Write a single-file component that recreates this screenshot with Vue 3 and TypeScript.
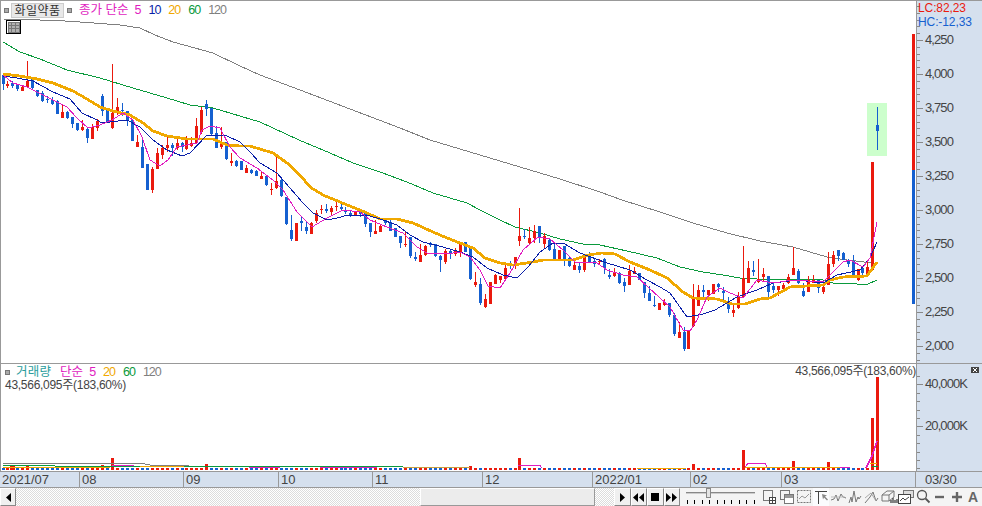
<script setup lang="ts">
type Raw = [number, number, number, number, number, 'r' | 'b']
interface Candle { x: number; bodyTop: number; bodyH: number; wickTop: number; wickBot: number; color: string }

const RED = '#ea1a0e'
const BLUE = '#1560d0'

// Sampled from the reference at 3x: [x, bodyTop, bodyBottom, wickTop, wickBottom, colour]
const sections: { x0: number; y0: number; rows: Raw[] }[] = [
  { x0: 0, y0: 60, rows: [
    [10,46,72,46,90,'b'],[22,72,78,63,85,'r'],[37,68,78,62,84,'b'],[52,75,87,75,93,'b'],[67,80,92,78,92,'r'],
    [82,64,82,2,85,'r'],[97,58,84,58,90,'b'],[112,90,108,90,112,'b'],[127,98,122,92,126,'b'],[142,118,122,108,130,'b'],
    [157,120,132,112,136,'b'],[172,124,162,120,162,'b'],[187,156,174,136,174,'r'],[202,156,174,152,178,'b'],[217,170,192,170,204,'b'],
    [232,188,208,188,212,'b'],[247,202,212,180,212,'r'],[262,208,236,205,248,'b'],[277,202,238,192,238,'r'],[292,182,202,178,212,'r'],
    [307,108,152,102,168,'b'],[322,148,188,148,188,'b'],[337,158,204,12,206,'r'],[352,142,158,114,166,'r'],[367,150,154,128,168,'b'],
    [382,154,184,154,198,'b'],[397,180,242,180,242,'b'],[412,246,260,224,260,'r'],[427,260,324,234,324,'b'],[442,312,390,312,390,'b'],
    [457,326,390,322,398,'r'],[472,278,326,264,326,'r'],[487,264,286,256,298,'r'],[502,255,265,224,275,'r'],[517,254,264,250,288,'b'],
    [532,248,262,234,270,'r'],[547,250,262,245,276,'b'],[559,233,266,228,270,'r'],[574,248,256,232,262,'r'],[589,198,248,174,250,'r'],
    [604,150,216,140,222,'r'],[619,132,146,120,168,'b'],[634,144,222,144,224,'b'],[649,220,264,198,264,'b'],[664,250,262,200,268,'r'],
    [679,246,298,246,300,'b'],[694,304,310,280,318,'r'],[709,302,316,300,322,'b'],
  ] },
  { x0: 240, y0: 140, rows: [
    [4,62,88,62,88,'b'],[19,84,98,76,98,'r'],[34,90,100,88,102,'b'],[49,92,106,90,106,'b'],[64,108,116,92,116,'r'],
    [79,108,134,104,138,'b'],[94,148,151,130,165,'r'],[109,124,144,42,148,'r'],[124,120,168,115,170,'b'],[139,172,252,172,254,'b'],
    [154,270,298,226,302,'b'],[169,248,302,248,302,'r'],[184,242,248,228,272,'b'],[199,260,272,244,282,'b'],[214,250,282,246,282,'r'],
    [229,220,245,210,248,'r'],[244,207,209,195,222,'r'],[259,206,211,192,220,'b'],[274,204,216,198,224,'r'],[289,198,201,186,212,'r'],
    [304,200,206,192,210,'b'],[316,214,218,200,222,'b'],[331,220,226,212,230,'b'],[346,214,226,212,228,'r'],[361,216,222,208,230,'b'],
    [376,216,252,216,262,'b'],[391,248,276,248,292,'b'],[406,273,282,240,282,'r'],[421,258,276,252,276,'r'],[436,240,248,240,254,'b'],
    [451,246,274,240,274,'b'],[466,264,292,264,292,'b'],[481,288,310,288,324,'b'],[496,312,316,276,320,'r'],[511,292,348,292,354,'b'],
    [526,352,358,336,364,'b'],[541,344,366,312,366,'r'],[556,318,344,314,348,'r'],[571,310,316,306,322,'b'],[586,312,348,312,352,'b'],
    [601,348,360,344,396,'b'],[616,332,366,328,372,'r'],[631,334,340,330,356,'b'],[646,334,342,324,348,'r'],[661,308,338,308,350,'r'],
    [676,306,336,306,336,'b'],[691,324,416,324,420,'b'],
  ] },
  { x0: 460, y0: 200, rows: [
    [46,246,256,216,260,'r'],[61,252,310,234,314,'b'],[76,298,322,282,324,'r'],[91,246,312,246,312,'r'],[106,224,250,222,250,'r'],
    [121,228,240,228,248,'r'],[136,204,236,196,238,'r'],[151,188,198,182,206,'b'],[166,172,198,172,208,'r'],[178,108,123,24,138,'r'],
    [193,108,112,88,118,'b'],[208,114,130,82,132,'r'],[223,94,114,76,128,'r'],[238,78,114,78,128,'b'],[253,108,132,100,148,'r'],
    [268,120,150,114,152,'b'],[283,148,180,130,184,'b'],[298,150,180,150,182,'r'],[313,138,176,138,198,'b'],[328,174,198,172,202,'b'],
    [343,196,210,176,210,'r'],[358,198,210,186,218,'b'],[373,170,210,170,216,'r'],[388,168,186,156,190,'b'],[403,182,190,176,200,'b'],
    [418,184,188,178,192,'r'],[433,178,206,174,222,'b'],[448,226,232,206,238,'b'],[463,220,230,204,232,'r'],[478,218,248,216,252,'b'],
    [493,246,258,234,276,'b'],[508,212,254,196,254,'r'],[523,214,222,202,222,'r'],[538,220,240,218,240,'b'],[553,246,280,246,294,'b'],
    [568,280,304,258,304,'b'],[583,316,320,288,320,'b'],[598,308,330,308,330,'r'],[613,306,314,296,318,'r'],[628,310,345,310,350,'b'],
    [643,345,402,338,408,'b'],[658,396,414,366,414,'r'],
  ] },
  { x0: 660, y0: 200, rows: [
    [73,396,446,380,452,'b'],[85,392,446,392,446,'r'],[100,290,378,252,382,'r'],[115,270,318,255,318,'r'],[130,270,276,256,295,'b'],
    [145,270,285,270,304,'r'],[160,252,282,252,282,'r'],[175,252,262,250,275,'b'],[190,274,280,262,308,'b'],[205,306,326,290,338,'b'],
    [220,330,338,314,350,'r'],[235,292,326,276,326,'r'],[250,234,292,138,292,'r'],[265,204,248,183,248,'r'],[280,210,216,183,228,'b'],
    [295,238,248,178,248,'r'],[310,222,232,205,244,'r'],[325,228,276,228,294,'b'],[340,258,270,250,278,'b'],[355,258,270,258,288,'r'],
    [370,255,267,248,268,'r'],[385,230,248,222,252,'r'],[400,204,225,142,225,'r'],[415,212,248,206,252,'b'],[430,272,288,248,292,'b'],
    [445,240,276,228,276,'r'],[460,240,248,225,250,'r'],[475,240,264,240,280,'b'],[490,262,276,252,282,'r'],[505,192,255,155,255,'r'],
    [520,165,192,154,200,'r'],[535,150,168,150,182,'b'],[550,160,180,156,180,'b'],[565,180,192,176,200,'b'],[580,182,224,165,232,'b'],
    [595,208,242,208,242,'r'],[607,204,218,204,232,'b'],[622,202,226,184,226,'r'],[637,-114,210,-114,210,'r'],
  ] },
]

const candles: Candle[] = sections.flatMap(s =>
  s.rows.map(([x, t, b, wt, wb, c]) => ({
    x: Math.round(s.x0 + x / 3),
    bodyTop: Math.round(s.y0 + t / 3),
    bodyH: Math.max(1, Math.round((b - t) / 3)),
    wickTop: Math.round(s.y0 + wt / 3),
    wickBot: Math.round(s.y0 + wb / 3),
    color: c === 'r' ? RED : BLUE,
  })),
)

const pts = (a: number[][]) => a.map(p => p.join(',')).join(' ')

const ma120 = pts([[3,19],[40,20],[60,20.7],[90,22.7],[120,25],[140,28],[155,35],[173,42],[213,53],[240,66],[260,75],[300,90],[350,109],[400,128],[430,140],[480,155],[520,167],[560,179],[600,192],[622,200],[660,212],[693,223],[727,233],[760,241],[793,247],[827,257],[847,260],[873,263]])
const ma60 = pts([[3,42],[20,52],[40,59],[67,70],[100,78],[133,88],[167,98],[190,105],[213,108],[260,122],[299,140],[330,153],[353,163],[380,172],[407,182],[433,193],[467,203],[480,210],[500,220],[515,227],[540,233],[560,239],[583,244],[600,245],[627,251],[657,258],[680,267],[703,272],[723,275],[740,278],[757,279],[823,280],[833,283],[857,284],[868,284],[877,280]])
const ma20 = pts([[3,74],[20,76],[37,79],[53,83],[73,91],[87,99],[100,107],[113,111],[130,115],[143,123],[153,131],[167,136],[187,139],[213,139],[227,145],[240,146],[250,146],[273,153],[287,163],[300,175],[310,187],[323,195],[340,202],[367,213],[380,219],[397,219],[413,223],[433,232],[447,238],[460,243],[473,248],[485,258],[500,263],[513,265],[533,262],[543,260],[573,260],[588,255],[602,253],[615,254],[630,262],[650,270],[667,278],[683,292],[693,298],[717,299],[732,304],[745,304],[760,299],[770,298],[790,287],[823,285],[830,280],[843,277],[867,276],[877,262]])
const ma10 = pts([[3,76],[17,78],[33,81],[53,92],[70,99],[82,113],[97,120],[102,123],[110,122],[127,120],[140,127],[153,140],[167,150],[182,156],[190,153],[207,135],[227,136],[240,142],[250,152],[260,163],[277,173],[290,188],[303,203],[313,213],[327,220],[337,218],[348,215],[370,216],[380,219],[397,225],[410,235],[423,242],[443,247],[460,252],[473,257],[487,268],[503,275],[517,278],[528,267],[540,252],[553,243],[563,243],[580,253],[607,263],[630,270],[647,280],[660,287],[670,293],[687,317],[703,314],[715,310],[737,297],[757,290],[773,283],[797,280],[823,283],[837,275],[860,270],[870,258],[877,242]])
const ma5 = pts([[3,75],[13,83],[27,87],[37,92],[53,100],[67,107],[77,118],[88,128],[100,125],[112,120],[123,113],[133,120],[142,137],[150,160],[160,166],[168,160],[177,147],[197,143],[202,130],[210,126],[220,128],[230,147],[240,158],[257,168],[273,180],[283,190],[297,212],[312,227],[327,218],[343,210],[360,212],[370,220],[387,227],[403,233],[417,247],[427,253],[453,253],[460,252],[470,257],[480,270],[488,286],[500,288],[510,273],[523,250],[538,237],[550,239],[563,250],[575,262],[597,263],[607,270],[623,275],[637,277],[660,298],[670,307],[683,330],[690,331],[697,320],[707,297],[720,288],[730,293],[743,298],[757,280],[773,283],[793,280],[823,282],[843,262],[850,260],[863,267],[870,258],[877,222]])

// Price axis
const priceTicks = ['4,250','4,000','3,750','3,500','3,250','3,000','2,750','2,500','2,250','2,000'].map((label, i) => ({ label, y: 40 + i * 34 }))
const minorY: number[] = []
for (let y = 40 - 34; y < 362; y += 6.8) minorY.push(Math.round(y))

// Volume pane
const bigVolumes = [
  { x: 10, w: 5, top: 466, c: RED }, { x: 26, w: 3, top: 466, c: RED }, { x: 101, w: 3, top: 465, c: RED },
  { x: 111, w: 3, top: 458, c: RED }, { x: 205, w: 3, top: 464, c: RED }, { x: 469, w: 3, top: 466, c: RED },
  { x: 518, w: 3, top: 458, c: RED }, { x: 692, w: 3, top: 464, c: RED }, { x: 742, w: 3, top: 450, c: RED },
  { x: 792, w: 3, top: 461, c: RED }, { x: 827, w: 3, top: 462, c: RED }, { x: 871, w: 3, top: 418, c: RED },
  { x: 876, w: 3, top: 377, c: RED },
]
const smallVolumes = candles.map(c => ({ x: c.x - 1, c: c.color }))
const volMinor: number[] = []
for (let y = 376; y < 470; y += 8.4) volMinor.push(Math.round(y))

const dateCells = [
  { w: 80, t: '2021/07' }, { w: 104, t: '08' }, { w: 95, t: '09' }, { w: 94, t: '10' }, { w: 110, t: '11' },
  { w: 110, t: '12' }, { w: 98, t: '2022/01' }, { w: 91, t: '02' }, { w: 134, t: '03' },
]
const sliderTicks = Array.from({ length: 10 }, (_, i) => i)
</script>

<template>
  <div class="page">
    <section class="price-row">
      <div class="plot">
        <svg class="chart" width="916" height="362" viewBox="0 1 916 362" shape-rendering="crispEdges">
          <rect x="867" y="103" width="20" height="53" fill="#ccffcc" />
          <polyline :points="ma120" class="l" stroke="#7f7f7f" stroke-width="1" />
          <polyline :points="ma60" class="l" stroke="#0a9a3c" stroke-width="1" />
          <g v-for="c in candles" :key="c.x + '-' + c.bodyTop">
            <rect :x="c.x" :y="c.wickTop" width="1" :height="c.wickBot - c.wickTop" :fill="c.color" />
            <rect :x="c.x - 1" :y="c.bodyTop" width="3" :height="c.bodyH" :fill="c.color" />
          </g>
          <polyline :points="ma20" class="l" stroke="#f0a800" stroke-width="2.8" />
          <polyline :points="ma10" class="l" stroke="#0a1fa8" stroke-width="1" />
          <polyline :points="ma5" class="l" stroke="#e01cc0" stroke-width="1" />
          <rect x="877" y="107" width="1" height="43" :fill="BLUE" />
          <rect x="876" y="125" width="3" height="6" :fill="BLUE" />
          <rect x="912" y="34" width="3" height="136" :fill="RED" />
          <rect x="912" y="170" width="3" height="134" :fill="BLUE" />
        </svg>
        <div class="legend">
          <i class="sq"></i>
          <span class="name-btn">화일약품</span>
          <i class="sq"></i>
          <span class="m first">종가 단순</span>
          <span class="m five num">5</span>
          <span class="n10 num">10</span>
          <span class="o num">20</span>
          <span class="g num">60</span>
          <span class="gy num">120</span>
        </div>
        <svg class="grid-icon" width="15" height="14" viewBox="0 0 15 14" shape-rendering="crispEdges">
          <rect x="0.5" y="0.5" width="14" height="13" fill="#fff" stroke="#000" />
          <rect x="2" y="2" width="11" height="10" fill="#b0b0b0" stroke="#777" stroke-width="1" />
          <path d="M2 5h11M2 8.5h11M5.5 2v10M9.5 2v10" stroke="#777" fill="none" />
        </svg>
      </div>
      <aside class="axis">
        <svg width="65" height="362" viewBox="917 1 65 362" shape-rendering="crispEdges">
          <rect v-for="y in minorY" :key="y" x="917" :y="y" width="3" height="1" fill="#888" />
          <g v-for="t in priceTicks" :key="t.label">
            <rect x="917" :y="t.y" width="6" height="1" fill="#888" />
            <text x="925" :y="t.y + 4" class="ax">{{ t.label }}</text>
          </g>
          <text x="918" y="11.5" class="lc">LC:82,23</text>
          <text x="918" y="25.5" class="hc">HC:-12,33</text>
        </svg>
      </aside>
    </section>

    <section class="vol-row">
      <div class="plot">
        <svg class="chart" width="916" height="107" viewBox="0 364 916 107" shape-rendering="crispEdges">
          <rect v-for="v in smallVolumes" :key="v.x" :x="v.x" y="468" width="3" height="2" :fill="v.c" />
          <rect v-for="v in bigVolumes" :key="v.x" :x="v.x" :y="v.top" :width="v.w" :height="470 - v.top" :fill="v.c" />
          <polyline points="3,463.5 145,463.5 145,464.5 150,464.5 150,465.5 189,465.5" class="l" stroke="#7f7f7f" />
          <polyline points="3,465.5 55,465.5 55,466.5 403,466.5" class="l" stroke="#0a9a3c" />
          <polyline points="3,467.5 110,467.5" class="l" stroke="#f0a800" />
          <polyline points="140,466.5 184,466.5" class="l" stroke="#f0a800" />
          <polyline points="403,467.5 470,467.5" class="l" stroke="#c8a040" />
          <polyline points="637,468.5 686,468.5" class="l" stroke="#f0a800" />
          <polyline points="745,467.5 840,467.5" class="l" stroke="#f0a800" stroke-width="1.5" />
          <polyline points="112,465.5 134,465.5" class="l" stroke="#e01cc0" />
          <polyline points="518,465.5 540,465.5 542,468" class="l" stroke="#e01cc0" />
          <polyline points="745,467 748,463.5 765,463.5 767,467" class="l" stroke="#e01cc0" />
          <polyline points="249,467.5 280,467.5" class="l" stroke="#e01cc0" />
          <polyline points="320,467.5 377,467.5" class="l" stroke="#e01cc0" />
          <polyline points="840,467.5 850,467.5" class="l" stroke="#e01cc0" />
          <polyline points="866,468 872,456 877,441" class="l" stroke="#e01cc0" stroke-width="1.5" />
          <polyline points="870,464 877,463" class="l" stroke="#f0a800" />
          <polyline points="872,467 878,466" class="l" stroke="#0a9a3c" />
        </svg>
        <div class="vol-legend">
          <div class="vol-line">
            <i class="sq"></i>
            <span class="teal">거래량</span>
            <span class="m d">단순</span>
            <span class="m n5 num">5</span>
            <span class="o num">20</span>
            <span class="g num">60</span>
            <span class="gy num">120</span>
          </div>
          <div class="vol-val">43,566,095주(183,60%)</div>
        </div>
        <div class="vol-val right">43,566,095주(183,60%)</div>
      </div>
      <aside class="axis">
        <svg width="65" height="107" viewBox="917 364 65 107" shape-rendering="crispEdges">
          <rect v-for="y in volMinor" :key="y" x="917" :y="y" width="3" height="1" fill="#888" />
          <rect x="917" y="384" width="6" height="1" fill="#888" />
          <rect x="917" y="426" width="6" height="1" fill="#888" />
          <text x="925" y="388" class="ax">40,000K</text>
          <text x="925" y="430" class="ax">20,000K</text>
          <rect x="971" y="367" width="8" height="6" fill="#444" />
          <path d="M973 368l4 4M977 368l-4 4" stroke="#fff" fill="none" />
        </svg>
      </aside>
    </section>

    <section class="date-row">
      <div class="dates">
        <span v-for="c in dateCells" :key="c.t" class="cell" :style="{ width: c.w + 'px' }">{{ c.t }}</span>
      </div>
      <span class="date-end">03/30</span>
    </section>

    <section class="tool-row">
      <button class="btn arrow-btn">
        <svg width="7" height="9" viewBox="0 0 7 9"><path d="M6 0v9L1 4.5z" fill="#000" /></svg>
      </button>
      <div class="track left-track"></div>
      <div class="thumb"></div>
      <div class="track right-track"></div>
      <button class="btn play"><svg width="9" height="9" viewBox="0 0 9 9"><path d="M2 0v9l5-4.5z" /></svg></button>
      <button class="btn play"><svg width="11" height="9" viewBox="0 0 11 9"><path d="M5 0v9L0 4.5zM11 0v9L6 4.5z" /></svg></button>
      <button class="btn play"><svg width="9" height="9" viewBox="0 0 9 9"><rect width="8" height="8" /></svg></button>
      <button class="btn play"><svg width="11" height="9" viewBox="0 0 11 9"><path d="M0 0v9l5-4.5zM6 0v9l5-4.5z" /></svg></button>
      <div class="slider">
        <svg width="72" height="18" viewBox="0 0 72 18" shape-rendering="crispEdges">
          <rect x="0" y="4" width="69" height="1" fill="#888" />
          <rect x="0" y="5" width="69" height="1" fill="#ccc" />
          <rect x="20" y="0" width="4" height="9" fill="#e4e4e4" stroke="#888" />
          <rect v-for="i in sliderTicks" :key="i" :x="1 + i * 7.4" y="12" width="1" height="4" fill="#000" />
        </svg>
      </div>
      <div class="icons">
        <svg width="205" height="18" viewBox="0 0 205 18" fill="none" stroke="#777" stroke-width="1">
          <!-- window + grid -->
          <rect x="1.5" y="2.5" width="9" height="10" />
          <rect x="7.5" y="9.5" width="6" height="6" fill="#fff" stroke="#444" />
          <path d="M7.5 12.5h6M10.5 9.5v6" stroke="#444" />
          <!-- overlapping windows -->
          <rect x="18.5" y="2.5" width="9" height="9" />
          <rect x="22.5" y="6.5" width="9" height="9" fill="#fff" />
          <rect x="23" y="7" width="8" height="3" fill="#999" stroke="none" />
          <!-- dashed chart frame -->
          <rect x="35.5" y="2.5" width="13" height="12" stroke-dasharray="2 1" />
          <path d="M37 11l3-3 3 2 4-4" stroke="#999" />
          <!-- pressed crosshair tool -->
          <rect x="51" y="0" width="16" height="18" fill="#fbfcfe" stroke="none" />
          <path d="M53 3.5h12M56.5 3v13" stroke="#444" />
          <path d="M60 6l5 1.5-2 1 3 3-1 1-3-3-1 2z" fill="#888" stroke="none" />
          <!-- line tools -->
          <path d="M69 12l3-1 2-4 2 6 3-7 2 3 3 1" />
          <path d="M69 9h14" stroke="#bbb" />
          <path d="M87 15l2-6 1 5 2-11 2 11 2-5 1 2 2-3" />
          <path d="M103 15l5-6 3-5 2 6 1 3 2-3" />
          <path d="M103 10l6-5 5 8" stroke="#aaa" />
          <!-- 3d box + bars -->
          <path d="M120 7l5-4h7v6l-5 4h-7zM120 7h7v6M127 7l5-4" />
          <path d="M129 15v-3M131 15v-5M133 15v-3M135 15v-4" stroke="#333" stroke-width="1.2" />
          <!-- picture chart -->
          <rect x="141.5" y="2.5" width="10" height="7" fill="#ddd" />
          <rect x="136.5" y="6.5" width="12" height="9" fill="#fff" stroke="#444" />
          <path d="M138 13l3-3 2 2 4-3" stroke="#444" />
          <!-- magnifier -->
          <circle cx="160" cy="7" r="4.5" stroke="#555" stroke-width="1.3" />
          <path d="M163.5 10.5l4 4" stroke="#555" stroke-width="1.8" />
          <!-- minus, plus -->
          <path d="M173 9h9" stroke="#666" stroke-width="2.4" />
          <path d="M190 9h10M195 4v10" stroke="#666" stroke-width="2.4" />
        </svg>
        <span class="a-icon">A</span>
      </div>
    </section>
  </div>
</template>

<style scoped>
.page {
  width: 982px;
  height: 506px;
  display: flex;
  flex-direction: column;
  overflow: hidden;
  background: #fff;
  font-family: "Liberation Sans", "Noto Sans CJK KR", sans-serif;
  font-size: 12px;
  color: #444;
}
.price-row,
.vol-row {
  display: flex;
  border-top: 1px solid #999;
  flex: none;
}
.price-row { height: 363px; box-sizing: border-box; border-top-width: 1px; }
.vol-row { height: 108px; box-sizing: border-box; }
.plot {
  position: relative;
  width: 916px;
  flex: none;
  border-left: 1px solid #999;
  box-sizing: border-box;
  overflow: hidden;
}
.chart { display: block; margin-left: -1px; }
.axis {
  flex: none;
  width: 66px;
  background: #d5e0ee;
  border-left: 1px solid #999;
  box-sizing: border-box;
}
.axis svg { display: block; }
.l { fill: none; stroke-linejoin: round; }
.ax {
  font-size: 13px;
  fill: #444;
  letter-spacing: -0.9px;
}
.lc, .hc { font-size: 12px; letter-spacing: -0.1px; }
.lc { fill: #ea1a0e; }
.hc { fill: #1560d0; }

.legend {
  position: absolute;
  top: 1px;
  left: 3px;
  display: flex;
  align-items: center;
  height: 16px;
  font-size: 12.5px;
  line-height: 16px;
}
.sq {
  display: inline-block;
  flex: none;
  background: #aaa;
  border: 1px solid #777;
  box-sizing: content-box;
  width: 3px;
  height: 3px;
}
.name-btn {
  width: 53px;
  height: 15px;
  margin: 0 3px 0 2px;
  text-align: center;
  line-height: 15px;
  background: #e8e8e8;
  border: 1px solid #ccc;
  box-sizing: border-box;
  color: #333;
  letter-spacing: 0.5px;
  font-size: 12px;
}
.num { letter-spacing: -1px; }
.first { margin-left: 7px; }
.legend .five { margin-left: 6px; }
.m { color: #e01cc0; }
.n10 { color: #0a1fa8; margin-left: 8px; }
.o { color: #f0a800; margin-left: 8px; }
.g { color: #0a9a3c; margin-left: 8px; }
.gy { color: #7f7f7f; margin-left: 8px; }
.grid-icon {
  position: absolute;
  left: 5px;
  top: 19px;
  display: block;
}

.vol-legend {
  position: absolute;
  top: 1px;
  left: 4px;
  font-size: 12.5px;
}
.vol-line {
  display: flex;
  align-items: center;
  height: 14px;
  line-height: 14px;
}
.teal { color: #2a9d9d; letter-spacing: 0.2px; margin-left: 6px; }
.vol-line .d { margin-left: 9px; }
.vol-line .n5 { margin-left: 6px; }
.vol-val {
  color: #444;
  font-size: 12px;
  line-height: 13px;
  letter-spacing: -0.28px;
  white-space: nowrap;
}
.right {
  position: absolute;
  top: 1px;
  right: 0;
}

.date-row {
  flex: none;
  height: 17px;
  display: flex;
  background: #d5e0ee;
  border-top: 1px solid #999;
  border-bottom: 1px solid #999;
  box-sizing: border-box;
  font-size: 13px;
  line-height: 15px;
}
.dates { display: flex; width: 916px; flex: none; }
.cell {
  flex: none;
  box-sizing: border-box;
  padding-left: 2px;
  border-right: 1px solid #999;
  letter-spacing: 0;
  overflow: hidden;
}
.date-end { margin-left: 9px; letter-spacing: -0.2px; }

.tool-row {
  flex: 1;
  display: flex;
  align-items: stretch;
  background: #f4f4f4;
  min-height: 0;
}
.btn {
  flex: none;
  padding: 0;
  margin: 0;
  height: 18px;
  background: #f0f0f0;
  border: 1px solid;
  border-color: #fff #888 #888 #fff;
  display: flex;
  align-items: center;
  justify-content: center;
  box-sizing: border-box;
}
.arrow-btn { width: 16px; }
.play { width: 16.5px; }
.play svg { fill: #000; display: block; }
.track {
  flex: none;
  background-image: conic-gradient(#fff 25%, #dcdcdc 0 50%, #fff 0 75%, #dcdcdc 0);
  background-size: 2px 2px;
}
.left-track { width: 404px; }
.right-track { width: 19px; }
.thumb {
  flex: none;
  width: 175px;
  background: #ececec;
  border: 1px solid;
  border-color: #fff #999 #999 #fff;
  box-sizing: border-box;
}
.slider { flex: none; width: 77px; padding-left: 6px; box-sizing: border-box; }
.slider svg { display: block; }
.icons {
  flex: none;
  display: flex;
  align-items: center;
  width: 220px;
  margin-left: 5px;
}
.icons svg { flex: none; display: block; }
.a-icon {
  margin-left: 1px;
  font-family: "Liberation Sans", sans-serif;
  font-weight: 700;
  font-size: 14px;
  color: #666;
}
</style>
